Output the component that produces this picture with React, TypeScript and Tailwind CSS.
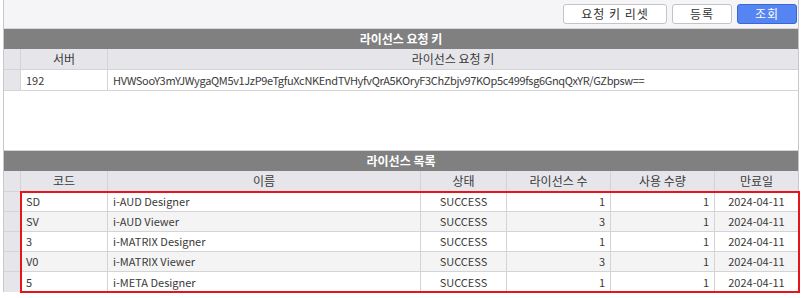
import React from 'react';

const font = { fontFamily: '"Noto Sans CJK KR", "Noto Sans", sans-serif' };

const licenses = [
  { code: 'SD', name: 'i-AUD Designer', status: 'SUCCESS', count: 1, used: 1, expire: '2024-04-11' },
  { code: 'SV', name: 'i-AUD Viewer', status: 'SUCCESS', count: 3, used: 1, expire: '2024-04-11' },
  { code: '3', name: 'i-MATRIX Designer', status: 'SUCCESS', count: 1, used: 1, expire: '2024-04-11' },
  { code: 'V0', name: 'i-MATRIX Viewer', status: 'SUCCESS', count: 3, used: 1, expire: '2024-04-11' },
  { code: '5', name: 'i-META Designer', status: 'SUCCESS', count: 1, used: 1, expire: '2024-04-11' },
];

const keyCols = 'grid grid-cols-[17px_87px_1fr]';
const listCols = 'grid grid-cols-[17px_87px_313px_86px_104px_104px_1fr]';

function TitleBar({ title }: { title: string }) {
  return (
    <div className="flex h-[20px] items-center justify-center bg-[#808080] text-[12px] font-bold text-white">
      {title}
    </div>
  );
}

export default function App() {
  return (
    <div className="h-[298px] w-[808px] bg-white text-[12px] text-[#3a3a3a]" style={font}>
      <div className="ml-[3px] w-[796px] border-x border-[#c8c8cc]">
        {/* Toolbar */}
        <div className="flex h-[29px] items-center justify-end gap-[5px] border-b border-[#d8d8dc] bg-[#f5f5f7] pr-[1px]">
          <button className="h-[20px] w-[104px] rounded-[3px] border border-[#c4c4c8] bg-white text-[12px] tracking-[1px] text-[#333]">
            요청 키 리셋
          </button>
          <button className="h-[20px] w-[60px] rounded-[3px] border border-[#c4c4c8] bg-white text-[12px] tracking-[1px] text-[#333]">
            등록
          </button>
          <button className="h-[20px] w-[60px] rounded-[3px] border border-[#3a66d8] bg-[#5585f2] text-[12px] tracking-[1px] text-white">
            조회
          </button>
        </div>

        {/* License request key */}
        <TitleBar title="라이선스 요청 키" />
        <div className={`${keyCols} h-[21px] border-b border-[#d4d4d8] bg-[#e6e6ea]`}>
          <div className="border-r border-[#d4d4d8]" />
          <div className="flex items-center justify-center border-r border-[#d4d4d8]">서버</div>
          <div className="flex items-center justify-center">라이선스 요청 키</div>
        </div>
        <div className={`${keyCols} h-[21px] border-b border-[#d4d4d8] bg-white text-[11px]`}>
          <div className="border-r border-[#d4d4d8] bg-[#e6e6ea]" />
          <div className="flex items-center border-r border-[#d4d4d8] px-[5px]">192</div>
          <div className="flex items-center px-[5px] tracking-[-0.35px]">
            HVWSooY3mYJWygaQM5v1JzP9eTgfuXcNKEndTVHyfvQrA5KOryF3ChZbjv97KOp5c499fsg6GnqQxYR/GZbpsw==
          </div>
        </div>
        <div className="h-[60px] border-b border-[#d4d4d8] bg-white" />

        {/* License list */}
        <TitleBar title="라이선스 목록" />
        <div className={`${listCols} h-[21px] border-b border-[#d4d4d8] bg-[#e6e6ea]`}>
          <div className="border-r border-[#d4d4d8]" />
          {['코드', '이름', '상태', '라이선스 수', '사용 수량'].map((h) => (
            <div key={h} className="flex items-center justify-center border-r border-[#d4d4d8]">
              {h}
            </div>
          ))}
          <div className="flex items-center justify-center">만료일</div>
        </div>
        <div className="relative text-[11px]">
          {licenses.map((l, i) => (
            <div
              key={l.code}
              className={`${listCols} h-[20px] border-b border-[#d4d4d8] ${i % 2 === 0 ? 'bg-white' : 'bg-[#f4f4f4]'} ${i === licenses.length - 1 ? 'border-b-0' : ''}`}
            >
              <div className="border-r border-[#d4d4d8] bg-[#e6e6ea]" />
              <div className="flex items-center border-r border-[#d4d4d8] px-[5px]">{l.code}</div>
              <div className="flex items-center border-r border-[#d4d4d8] px-[5px]">{l.name}</div>
              <div className="flex items-center justify-center border-r border-[#d4d4d8]">{l.status}</div>
              <div className="flex items-center justify-end border-r border-[#d4d4d8] px-[5px]">{l.count}</div>
              <div className="flex items-center justify-end border-r border-[#d4d4d8] px-[5px]">{l.used}</div>
              <div className="flex items-center justify-center">{l.expire}</div>
            </div>
          ))}
          {/* highlight overlay */}
          <div className="pointer-events-none absolute -bottom-[1px] -right-[2px] -top-[1px] left-[16px] border-2 border-[#e8141c]" />
        </div>
      </div>
    </div>
  );
}
